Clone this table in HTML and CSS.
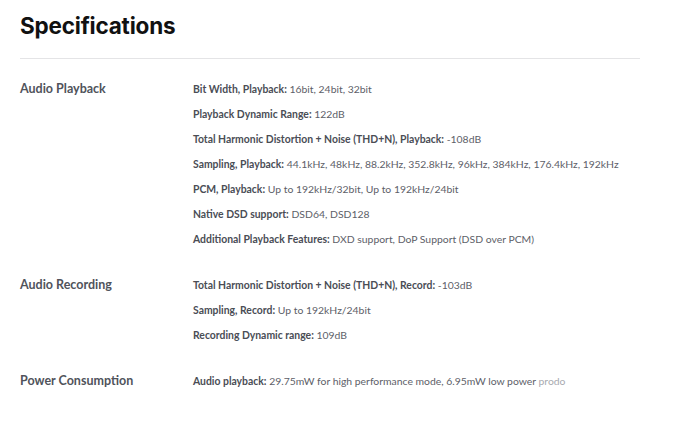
FILE: index.html
```html
<!DOCTYPE html>
<html>
<head>
<meta charset="utf-8">
<link rel="stylesheet" href="styles.css">
</head>
<body>
<div class="page">
  <h1 class="title">Specifications</h1>
  <div class="rule"></div>
  <div class="section">
    <div class="label">Audio Playback</div>
    <div class="values">
      <div class="row"><b>Bit Width, Playback:</b> 16bit, 24bit, 32bit</div>
      <div class="row"><b>Playback Dynamic Range:</b> 122dB</div>
      <div class="row"><b>Total Harmonic Distortion + Noise (THD+N), Playback:</b> -108dB</div>
      <div class="row"><b>Sampling, Playback:</b> 44.1kHz, 48kHz, 88.2kHz, 352.8kHz, 96kHz, 384kHz, 176.4kHz, 192kHz</div>
      <div class="row"><b>PCM, Playback:</b> Up to 192kHz/32bit, Up to 192kHz/24bit</div>
      <div class="row"><b>Native DSD support:</b> DSD64, DSD128</div>
      <div class="row"><b>Additional Playback Features:</b> DXD support, DoP Support (DSD over PCM)</div>
    </div>
  </div>
  <div class="section">
    <div class="label">Audio Recording</div>
    <div class="values">
      <div class="row"><b>Total Harmonic Distortion + Noise (THD+N), Record:</b> -103dB</div>
      <div class="row"><b>Sampling, Record:</b> Up to 192kHz/24bit</div>
      <div class="row"><b>Recording Dynamic range:</b> 109dB</div>
    </div>
  </div>
  <div class="section">
    <div class="label">Power Consumption</div>
    <div class="values">
      <div class="row"><b>Audio playback:</b> 29.75mW for high performance mode, 6.95mW low power <span class="fade">prodo</span></div>
    </div>
  </div>
</div>
</body>
</html>
```
FILE: styles.css
```css
html, body {
  margin: 0;
  padding: 0;
  background: #ffffff;
}
.page {
  padding: 12px 40px 0 20px;
  font-family: Lato, "Open Sans", sans-serif;
  color: #5d6068;
}
.title {
  margin: 0;
  font-family: Inter, Lato, sans-serif;
  font-weight: 700;
  font-size: 22.5px;
  line-height: 28px;
  color: #111111;
  letter-spacing: -0.2px;
}
.rule {
  height: 1px;
  background: #e4e4e6;
  margin-top: 18px;
  margin-bottom: 20px;
}
.section {
  display: grid;
  grid-template-columns: 173px 1fr;
  margin-bottom: 26px;
}
.label {
  font-size: 12.5px;
  font-weight: 700;
  color: #50535b;
  line-height: 20px;
}
.values {
  display: flex;
  flex-direction: column;
  gap: 5px;
}
.row {
  font-size: 10.4px;
  line-height: 20px;
  white-space: nowrap;
}
.row b {
  font-weight: 700;
  color: #4a4d55;
}
.fade {
  color: #a8aab0;
}
```
